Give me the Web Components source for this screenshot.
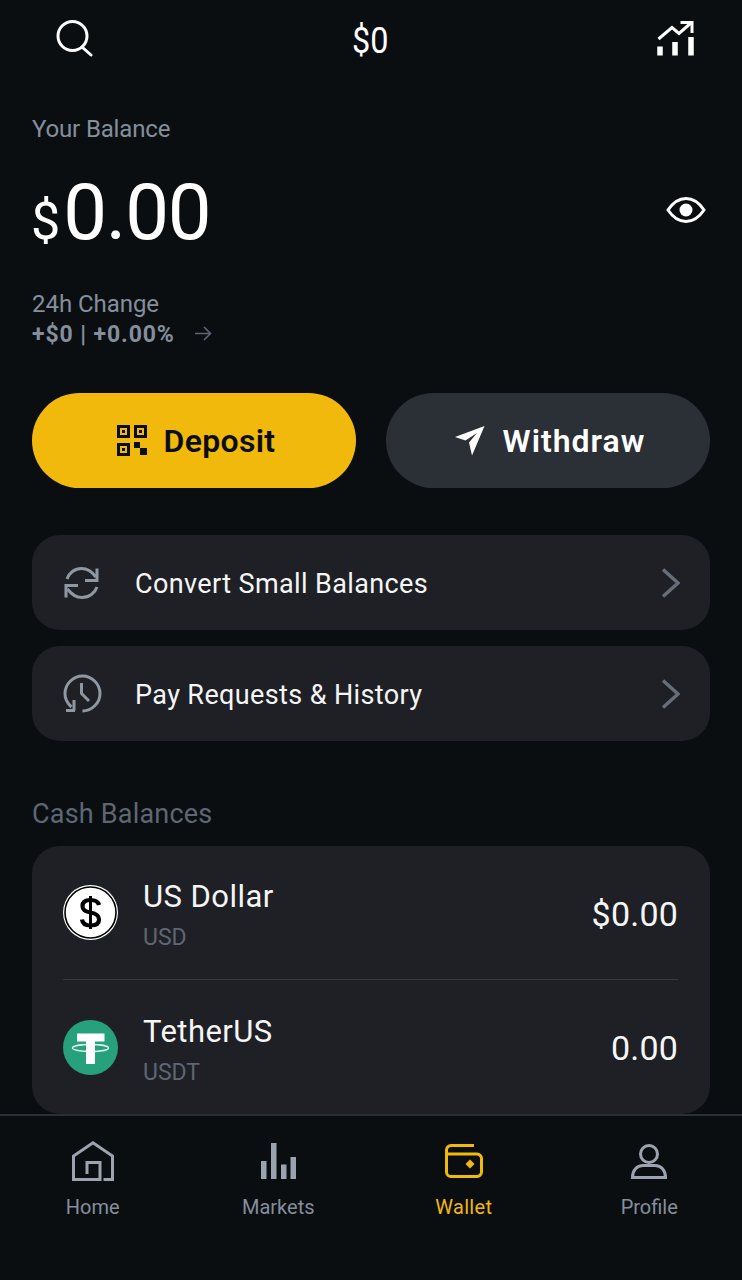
<!DOCTYPE html>
<html><head><meta charset="utf-8"><style>
html,body{margin:0;padding:0;background:#0b0e11}
body{font-family:Roboto,"Noto Sans",sans-serif;color:#fff}
wallet-app{display:flex;flex-direction:column;width:742px;height:1280px;overflow:hidden}
</style></head><body>
<wallet-app>
  <top-bar amount="$0"></top-bar>
  <main-scroll>
    <balance-panel></balance-panel>
    <action-buttons></action-buttons>
    <link-row icon="refresh" label="Convert Small Balances" style="margin-top:47px"></link-row>
    <link-row icon="history" label="Pay Requests &amp; History" style="margin-top:16px"></link-row>
    <section-title>Cash Balances</section-title>
    <asset-card>
      <asset-row coin="usd" name="US Dollar" code="USD" value="$0.00"></asset-row>
      <asset-row coin="usdt" name="TetherUS" code="USDT" value="0.00" class="next"></asset-row>
    </asset-card>
  </main-scroll>
  <tab-bar>
    <tab-item icon="home" label="Home"></tab-item>
    <tab-item icon="markets" label="Markets"></tab-item>
    <tab-item icon="wallet" label="Wallet" active></tab-item>
    <tab-item icon="profile" label="Profile"></tab-item>
  </tab-bar>
</wallet-app>
<script>
const ICONS={
search:'<svg width="37" height="37" viewBox="0 0 37 37" fill="none" stroke="#fff" stroke-width="3" stroke-linecap="round"><circle cx="16.5" cy="16" r="14.5"/><path d="M26 27l9 8"/></svg>',
chart:'<svg width="37" height="36" viewBox="0 0 37 36" fill="none" stroke="#fff" stroke-width="3"><path d="M1.5 19 15 7.500l7 6L34.500 2.500"/><path d="M23.500 2.500h11.500V13"/><path stroke-width="5.500" d="M3 26.500V35.500M18 22V35.500M34 17V35.500"/></svg>',
eye:'<svg width="40" height="26" viewBox="0 0 40 26" fill="none" stroke="#fff" stroke-width="3"><path d="M2 13C7 5.500 13 1.500 20 1.500S33 5.500 38 13C33 20.500 27 24.500 20 24.500S7 20.500 2 13Z"/><circle cx="20" cy="13" r="6.500" fill="#fff" stroke="none"/></svg>',
arrow:'<svg width="18" height="15" viewBox="0 0 18 15" fill="none" stroke="#5e6673" stroke-width="1.600"><path d="M1 7.500H16M10 1l6.500 6.500L10 14"/></svg>',
qr:'<svg width="30" height="31" viewBox="0 0 30 31" fill="none" stroke="#0b0e11" stroke-width="3"><rect x="1.500" y="1.500" width="10" height="10"/><rect x="18.500" y="1.500" width="10" height="10"/><rect x="1.500" y="19.500" width="10" height="10"/><g fill="#0b0e11" stroke="none"><rect x="5" y="5" width="3" height="3"/><rect x="22" y="5" width="3" height="3"/><rect x="5" y="23" width="3" height="3"/><rect x="17" y="17" width="6" height="6"/><rect x="23" y="23" width="7" height="7"/></g></svg>',
plane:'<svg width="30" height="30" viewBox="0 0 30 30" fill="#fff"><path d="M0 11 29.500 0 17 29.500 14 16.500 22 7 10.500 14.500Z"/></svg>',
refresh:'<svg width="40" height="32" viewBox="0 0 40 32" fill="none" stroke="#8f97a3" stroke-width="3"><path d="M5 12C7 6 12.500 1.500 19.500 1.500C26 1.500 30 4.500 34 10"/><path d="M35 1.500V13.500H23"/><path d="M35 20C33 26 27 30.500 20 30.500C13.500 30.500 9.500 27.500 5.500 22"/><path d="M4 30.500V18.500H16"/></svg>',
history:'<svg width="39" height="39" viewBox="0 0 39 39" fill="none" stroke="#8f97a3" stroke-width="3"><path d="M19.500 37C29 37 37 29 37 19.500S29 2 19.500 2 2 10 2 19.500C2 25 4.500 29.500 8.500 33"/><path d="M3 36.500H12M11 26V36.500"/><path d="M18.500 9V19.500L26 27"/></svg>',
chev:'<svg width="19" height="30" viewBox="0 0 19 30" fill="none" stroke="#666e7a" stroke-width="3.500"><path d="M2 1.500 17 15 2 28.500"/></svg>',
usd:'<svg width="55" height="55" viewBox="0 0 55 55"><circle cx="27.500" cy="27.500" r="27.500" fill="#fff"/><circle cx="27.500" cy="27.500" r="25.500" fill="none" stroke="#000" stroke-width="1.600"/><g fill="none" stroke="#000" stroke-width="4.200"><path d="M36 20C35 16 32 15 27.500 15 22 15 19.500 17 19.500 21 19.500 25 22 26.500 27.500 27.500 33 28.500 36 30 36 34.500 36 38.500 33 40.500 27.500 40.500 22.500 40.500 19.500 38.500 19 34.500"/><path stroke-width="3" d="M27.500 11V44"/></g></svg>',
usdt:'<svg width="55" height="55" viewBox="0 0 55 55"><circle cx="27.500" cy="27.500" r="27.500" fill="#26a17b"/><path fill="#fff" d="M14 13.500H41.500V21.500H32V44H23V21.500H14Z"/><ellipse cx="27.500" cy="28" rx="18" ry="3.500" fill="none" stroke="#fff" stroke-width="1.400" opacity=".85"/></svg>',
home:'<svg width="42" height="40" viewBox="0 0 42 40" fill="none" stroke="CURRENT" stroke-width="3"><path d="M31.500 38.500H40.500V15L21 1.800 1.500 15V38.500H28V21.500H15V33"/></svg>',
markets:'<svg width="35" height="36" viewBox="0 0 35 36" fill="CURRENT"><rect y="18" width="5.500" height="18"/><rect x="10" width="5.500" height="36"/><rect x="20" y="21.500" width="5.500" height="14.500"/><rect x="29.500" y="14" width="5.500" height="22"/></svg>',
wallet:'<svg width="38" height="34" viewBox="0 0 38 34" fill="none" stroke="CURRENT" stroke-width="3"><path d="M29 1.500H6A4.500 4.500 0 0 0 1.500 6V28A4.500 4.500 0 0 0 6 32.500H32A4.500 4.500 0 0 0 36.500 28V14.500A4.500 4.500 0 0 0 32 10H1.500"/><path fill="CURRENT" stroke="none" d="M25 15.500 29.500 20 25 24.500 20.500 20Z"/></svg>',
profile:'<svg width="36" height="35" viewBox="0 0 36 35" fill="none" stroke="CURRENT" stroke-width="3"><circle cx="18" cy="10" r="8.500"/><path d="M1.500 33.500C1.500 26 6 21.500 12 21.500H24C30 21.500 34.500 26 34.500 33.500Z"/></svg>'
};
function def(tag,html){
  customElements.define(tag,class extends HTMLElement{
    connectedCallback(){
      if(this.shadowRoot)return;
      const r=this.attachShadow({mode:'open'});
      r.innerHTML=typeof html==='function'?html(this):html;
    }
  });
}
def('top-bar',e=>`<style>
:host{display:flex;justify-content:space-between;align-items:center;flex:none;height:80px;padding:0 48px 0 56px}
.a{font-size:36px;line-height:1;margin-right:10px;padding-top:2px;transform:scaleX(.9)}
svg{display:block}.l{width:37px;margin-top:-4px}.r{width:37px;margin-top:-4px}
</style><div class="l">${ICONS.search}</div><div class="a">${e.getAttribute('amount')}</div><div class="r">${ICONS.chart}</div>`);
def('main-scroll',`<style>:host{display:block;flex:1;min-height:0;overflow:hidden;padding:0 32px}</style><slot></slot>`);
def('balance-panel',`<style>
:host{display:block;height:313px}
.lab{color:#848e9c;font-size:24px;line-height:30px;padding-top:34px;letter-spacing:-.15px}
.row{display:flex;justify-content:space-between;align-items:center;margin-top:31px;height:84px;padding-right:4px}
.val{font-size:78px;line-height:84px;letter-spacing:-1.2px;white-space:nowrap}
.val span{font-size:52px;letter-spacing:0;margin-right:3px;margin-left:-1px}
.row svg{display:block;margin-bottom:14px}
.ch{color:#848e9c;font-size:24px;line-height:30px;margin-top:30px;letter-spacing:-.05px}
.d{display:flex;align-items:center;color:#848e9c;font-size:23px;font-weight:700;line-height:30px;margin-top:1px;letter-spacing:.9px}
.d svg{margin-left:19px;margin-top:-4px;display:block}
</style><div class="lab">Your Balance</div>
<div class="row"><div class="val"><span>$</span>0.00</div>${ICONS.eye}</div>
<div class="ch">24h Change</div><div class="d">+$0 | +0.00%${ICONS.arrow}</div>`);
def('action-buttons',`<style>
:host{display:flex;gap:30px}
div{flex:1;height:95px;border-radius:48px;display:flex;align-items:center;justify-content:center;gap:18px;font-size:32px;font-weight:600;padding-left:4px}
.y{background:#f0b90b;color:#0b0e11;letter-spacing:.3px;gap:17px}.g{background:#2b2f36;color:#fff;letter-spacing:1px}
svg{display:block}
</style><div class="y">${ICONS.qr}<span>Deposit</span></div><div class="g">${ICONS.plane}<span>Withdraw</span></div>`);
def('link-row',e=>`<style>
:host{display:flex;align-items:center;height:95px;background:#1e2026;border-radius:28px;padding:0 30px 0 30px;color:#f5f5f5}
.i{width:40px;display:flex;justify-content:center;margin-right:33px}
svg{display:block}
span{flex:1;font-size:27px;letter-spacing:.38px;padding-top:2px}
</style><div class="i">${ICONS[e.getAttribute('icon')]}</div><span>${e.getAttribute('label').replace('&','&amp;')}</span>${ICONS.chev}`);
def('section-title',`<style>:host{display:block;color:#5e6673;font-size:27px;line-height:32px;margin-top:57px;margin-bottom:16px;letter-spacing:.2px}</style><slot></slot>`);
def('asset-card',`<style>:host{display:block;background:#1e2026;border-radius:28px;padding:0 32px 0 31px;height:268px;box-sizing:border-box}</style><slot></slot>`);
def('asset-row',e=>`<style>
:host{display:flex;align-items:center;height:133px}
:host(.next){border-top:1px solid #34383f;height:134px}
svg{display:block;flex:none}
.t{flex:1;margin-left:25px;padding-top:6px}
.n{font-size:31px;line-height:36px;color:#f5f5f5;letter-spacing:.45px}
.c{font-size:23px;line-height:28px;color:#5e6673;margin-top:9px}
.v{font-size:34px;color:#f5f5f5;letter-spacing:.2px;padding-top:2px}
</style>${ICONS[e.getAttribute('coin')]}<div class="t"><div class="n">${e.getAttribute('name')}</div><div class="c">${e.getAttribute('code')}</div></div><div class="v">${e.getAttribute('value')}</div>`);
def('tab-bar',`<style>:host{display:grid;grid-template-columns:repeat(4,1fr);flex:none;height:164px;border-top:2px solid #2b2f36;background:#0b0e11}</style><slot></slot>`);
def('tab-item',e=>{const on=e.hasAttribute('active');const c=on?'#f0b90b':'#848e9c';return `<style>
:host{display:flex;flex-direction:column;align-items:center;color:${c}}
.i{height:42px;margin-top:24px;display:flex;align-items:center;justify-content:center}
svg{display:block}
.l{font-size:20px;line-height:26px;margin-top:12px;letter-spacing:${on?'.3px':'0'}}
</style><div class="i">${ICONS[e.getAttribute('icon')].replaceAll('CURRENT',on?'#f0b90b':'#9ba3af')}</div><div class="l">${e.getAttribute('label')}</div>`});
</script>
</body></html>
